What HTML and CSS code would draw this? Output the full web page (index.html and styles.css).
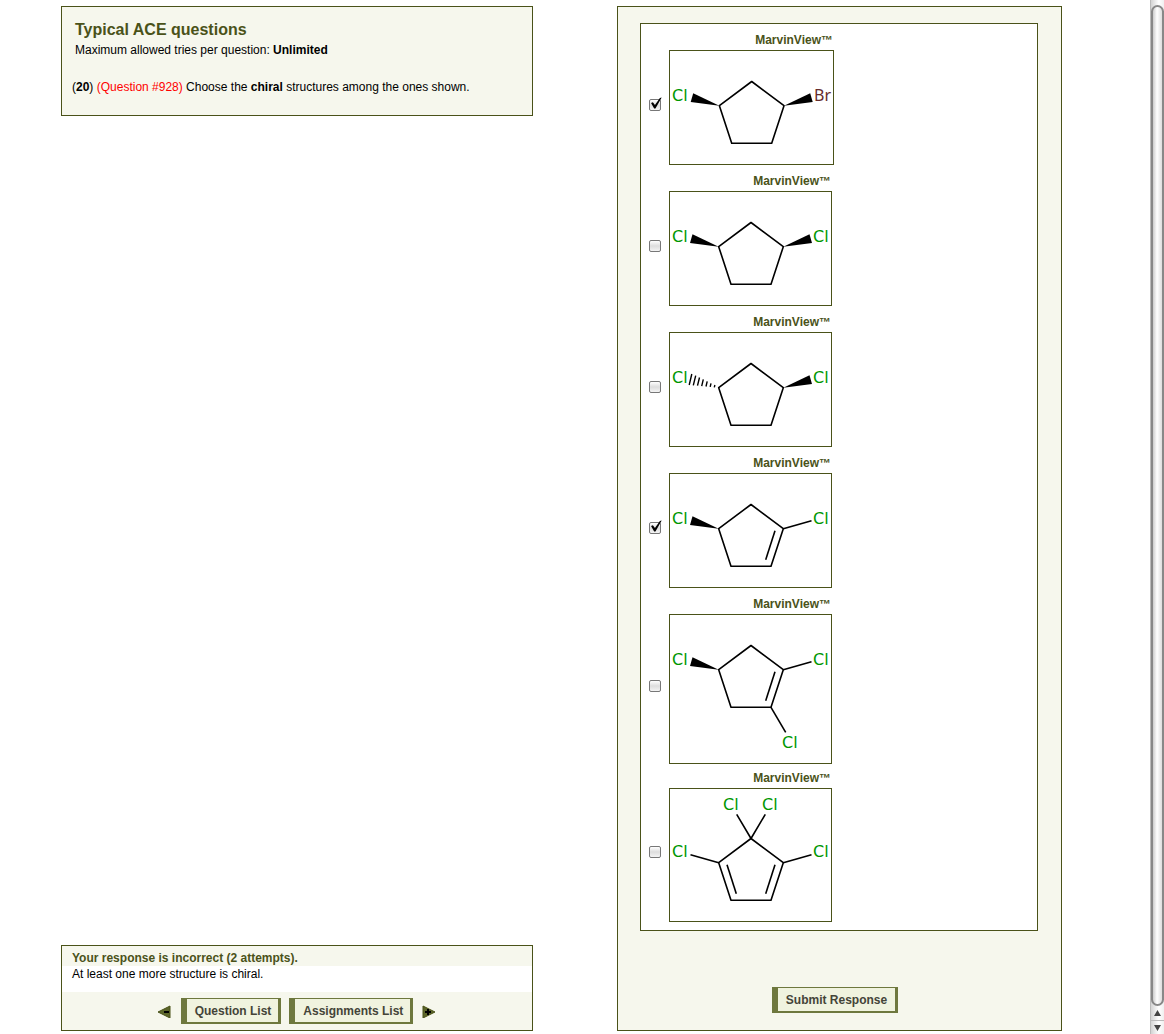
FILE: index.html
```html
<!DOCTYPE html>
<html lang="en">
<head>
<meta charset="utf-8">
<title>Typical ACE questions</title>
<link rel="stylesheet" href="styles.css">
</head>
<body>
<svg class="defs" aria-hidden="true">
  <defs>
    <path id="ring" d="M81 30.5L113.3 54.7L101 92.3H61L48.7 54.7Z"/>
    <path id="wedge-left" d="M48.7 54.7L20 51L22.5 42.3Z"/>
    <path id="wedge-right" d="M113.3 54.7L142 51L139.5 42.3Z"/>
    <path id="bond-left" d="M48.7 54.7L20.5 46.7"/>
    <path id="bond-right" d="M113.3 54.7L141.5 46.7"/>
    <path id="double-left" d="M57 56.7L66.3 85.7"/>
    <path id="double-right" d="M105 56.7L95.7 85.7"/>
  </defs>
</svg>
<div class="window">
  <main class="page">
    <div class="column">
      <section class="panel question">
        <h1>Typical ACE questions</h1>
        <p class="tries">Maximum allowed tries per question: <b>Unlimited</b></p>
        <p class="prompt">(<b>20</b>) <span class="number">(Question #928)</span> Choose the <b>chiral</b> structures among the ones shown.</p>
      </section>
      <section class="panel feedback">
        <h2>Your response is incorrect (2 attempts).</h2>
        <p class="hint">At least one more structure is chiral.</p>
        <nav class="nav">
          <a class="arrow" href="#" aria-label="Previous question"><svg width="14" height="14"><path class="tri" d="M1 8L13 2V14Z"/><path class="sign" d="M7 8H12"/></svg></a>
          <button class="btn" type="button">Question List</button>
          <button class="btn" type="button">Assignments List</button>
          <a class="arrow next" href="#" aria-label="Next question"><svg width="14" height="14"><path class="tri" d="M14 8L2 2V14Z"/><path class="sign" d="M4 8H10M7 5V11"/></svg></a>
        </nav>
      </section>
    </div>
    <form class="panel answer">
      <div class="options">
        <label class="option">
          <input type="checkbox" checked>
          <span class="structure"><span class="caption">MarvinView™</span>
            <svg class="mol" width="165" height="115" viewBox="0 0 163 113">
              <g transform="translate(.7 0)"><use href="#ring"/><use class="solid" href="#wedge-left"/><use class="solid" href="#wedge-right"/></g>
              <text x="2" y="50">Cl</text><text class="br" x="144" y="50">Br</text>
            </svg></span>
        </label>
        <label class="option">
          <input type="checkbox">
          <span class="structure"><span class="caption">MarvinView™</span>
            <svg class="mol" width="163" height="115" viewBox="0 0 161 113">
              <use href="#ring"/><use class="solid" href="#wedge-left"/><use class="solid" href="#wedge-right"/>
              <text x="2" y="50">Cl</text><text x="143" y="50">Cl</text>
            </svg></span>
        </label>
        <label class="option">
          <input type="checkbox">
          <span class="structure"><span class="caption">MarvinView™</span>
            <svg class="mol" width="163" height="115" viewBox="0 0 161 113">
              <use href="#ring"/><use class="solid" href="#wedge-right"/>
              <path class="hash" d="M19.200 52L21.800 41M23.300 52.300L25.700 42.700M27.500 52.700L29.500 44.500M31.700 53.100L33.300 46.400M36 53.500L37.200 48.300M40.200 53.900L41 50.400M44.300 54.400L44.900 52"/>
              <text x="2" y="50">Cl</text><text x="143" y="50">Cl</text>
            </svg></span>
        </label>
        <label class="option">
          <input type="checkbox" checked>
          <span class="structure"><span class="caption">MarvinView™</span>
            <svg class="mol" width="163" height="115" viewBox="0 0 161 113">
              <use href="#ring"/><use class="solid" href="#wedge-left"/><use href="#bond-right"/><use href="#double-right"/>
              <text x="2" y="50">Cl</text><text x="143" y="50">Cl</text>
            </svg></span>
        </label>
        <label class="option">
          <input type="checkbox">
          <span class="structure"><span class="caption">MarvinView™</span>
            <svg class="mol" width="163" height="150" viewBox="0 0 161 148">
              <use href="#ring"/><use class="solid" href="#wedge-left"/><use href="#bond-right"/><use href="#double-right"/>
              <path d="M101 92.3L115.7 117.3"/>
              <text x="2" y="50">Cl</text><text x="143" y="50">Cl</text><text x="112" y="133">Cl</text>
            </svg></span>
        </label>
        <label class="option">
          <input type="checkbox">
          <span class="structure"><span class="caption">MarvinView™</span>
            <svg class="mol" width="163" height="134" viewBox="0 0 161 132">
              <g transform="translate(0 19)"><use href="#ring"/><use href="#bond-left"/><use href="#bond-right"/><use href="#double-left"/><use href="#double-right"/></g>
              <path d="M66.7 25.3L81 49.5L95.3 25.3"/>
              <text x="2" y="68">Cl</text><text x="143" y="68">Cl</text><text x="53" y="21">Cl</text><text x="92" y="21">Cl</text>
            </svg></span>
        </label>
      </div>
      <div class="actions"><button class="btn" type="submit">Submit Response</button></div>
    </form>
  </main>
  <div class="scrollbar" aria-hidden="true">
    <div class="thumb"></div>
    <svg class="steps" width="13" height="28"><path class="line" d="M0 14.5H13"/><path d="M6.500 4L10 10H3ZM6.500 25L10 19H3Z"/></svg>
  </div>
</div>
</body>
</html>
```
FILE: styles.css
```css
* { box-sizing: border-box; }

body {
  margin: 0;
  background: #fff;
  color: #000;
  font: 12px/16px "Liberation Sans", Arial, sans-serif;
}

h1, h2, p { margin: 0; }

.defs { display: none; }

.window {
  display: flex;
  min-height: 100vh;
}

.page {
  flex: 1;
  display: grid;
  grid-template-columns: 472fr 445fr;
  gap: 84px;
  padding: 6px 88px 3px 61px;
}

.column {
  display: flex;
  flex-direction: column;
  justify-content: space-between;
}

.panel {
  background: #f6f7ed;
  border: 1px solid #4a5219;
}

.question { padding: 12px 10px 20px; }

.question h1 {
  padding-left: 3px;
  color: #4a5219;
  font-size: 16px;
  line-height: 22px;
}

.tries {
  margin-top: 1px;
  padding-left: 3px;
}

.prompt { margin-top: 21px; }

.number { color: #f00; }

.feedback h2 {
  padding: 4px 10px 0;
  color: #4a5219;
  font-size: 12px;
  line-height: 16px;
}

.hint {
  padding: 0 10px 10px;
  background: #fff;
}

.nav {
  display: flex;
  justify-content: center;
  align-items: center;
  gap: 8px;
  padding: 6px 2px 6px 0;
}

.nav .btn { padding-right: 7px; }

.arrow {
  display: flex;
  margin-right: 2px;
}

.next { margin: 0; }

.tri { fill: #5c662a; stroke: #4a5219; }

.sign { stroke: #000; stroke-width: 2; }

.btn {
  height: 26px;
  padding: 0 8px;
  border: solid #6e783e;
  border-width: 1px 3px 2px 6px;
  border-radius: 0;
  background: #f0f3df;
  color: #444438;
  font: bold 12px/16px "Liberation Sans", Arial, sans-serif;
}

.answer {
  display: flex;
  flex-direction: column;
  padding: 16px 23px 17px 22px;
}

.options {
  display: flex;
  flex-direction: column;
  gap: 7px;
  padding: 9px 8px 8px;
  border: 1px solid #4a5219;
  background: #fff;
}

.option {
  display: flex;
  align-items: center;
  align-self: flex-start;
  gap: 8px;
  min-height: 134px;
}

.option input {
  appearance: none;
  width: 12px;
  height: 12px;
  margin: 10px 0 0;
  border: 1px solid #777;
  border-radius: 2px;
  background: linear-gradient(#fff, #ddd 50%, #f4f4f4);
}

.option input:checked::after {
  content: "";
  display: block;
  width: 13px;
  height: 13px;
  margin: -3px 0 0;
  background: #000;
  clip-path: polygon(8% 46%, 22% 40%, 38% 62%, 76% 8%, 90% 4%, 42% 88%, 32% 88%);
}

.structure {
  align-self: flex-start;
  display: flex;
  flex-direction: column;
}

.caption {
  margin-bottom: 3px;
  padding-right: 1px;
  color: #4a5219;
  font-weight: bold;
  line-height: 14px;
  text-align: right;
}

.mol {
  display: block;
  border: 1px solid #4a5219;
  fill: none;
  stroke: #000;
  stroke-width: 1.6;
  stroke-linejoin: round;
}

.solid { fill: #000; stroke: none; }

.hash { stroke-width: 1.4; }

.mol text {
  fill: #009600;
  stroke: none;
  font: 16px "DejaVu Sans", sans-serif;
}

.mol .br {
  fill: #662c2c;
  font-family: "Noto Sans", sans-serif;
}

.actions {
  display: flex;
  justify-content: center;
  margin-top: auto;
  padding: 56px 8px 0 0;
}

.scrollbar {
  display: flex;
  flex-direction: column;
  width: 14px;
  padding-top: 5px;
  border-left: 1px solid #bbb;
  background: linear-gradient(90deg, #d4d4d4, #fff 60%, #f0f0f0);
}

.thumb {
  flex: 1;
  border: 2px solid #888;
  border-radius: 7px;
  background: linear-gradient(90deg, #ccc, #fff 45%, #ddd);
}

.steps { fill: #444; }

.line { stroke: #bbb; }
```
